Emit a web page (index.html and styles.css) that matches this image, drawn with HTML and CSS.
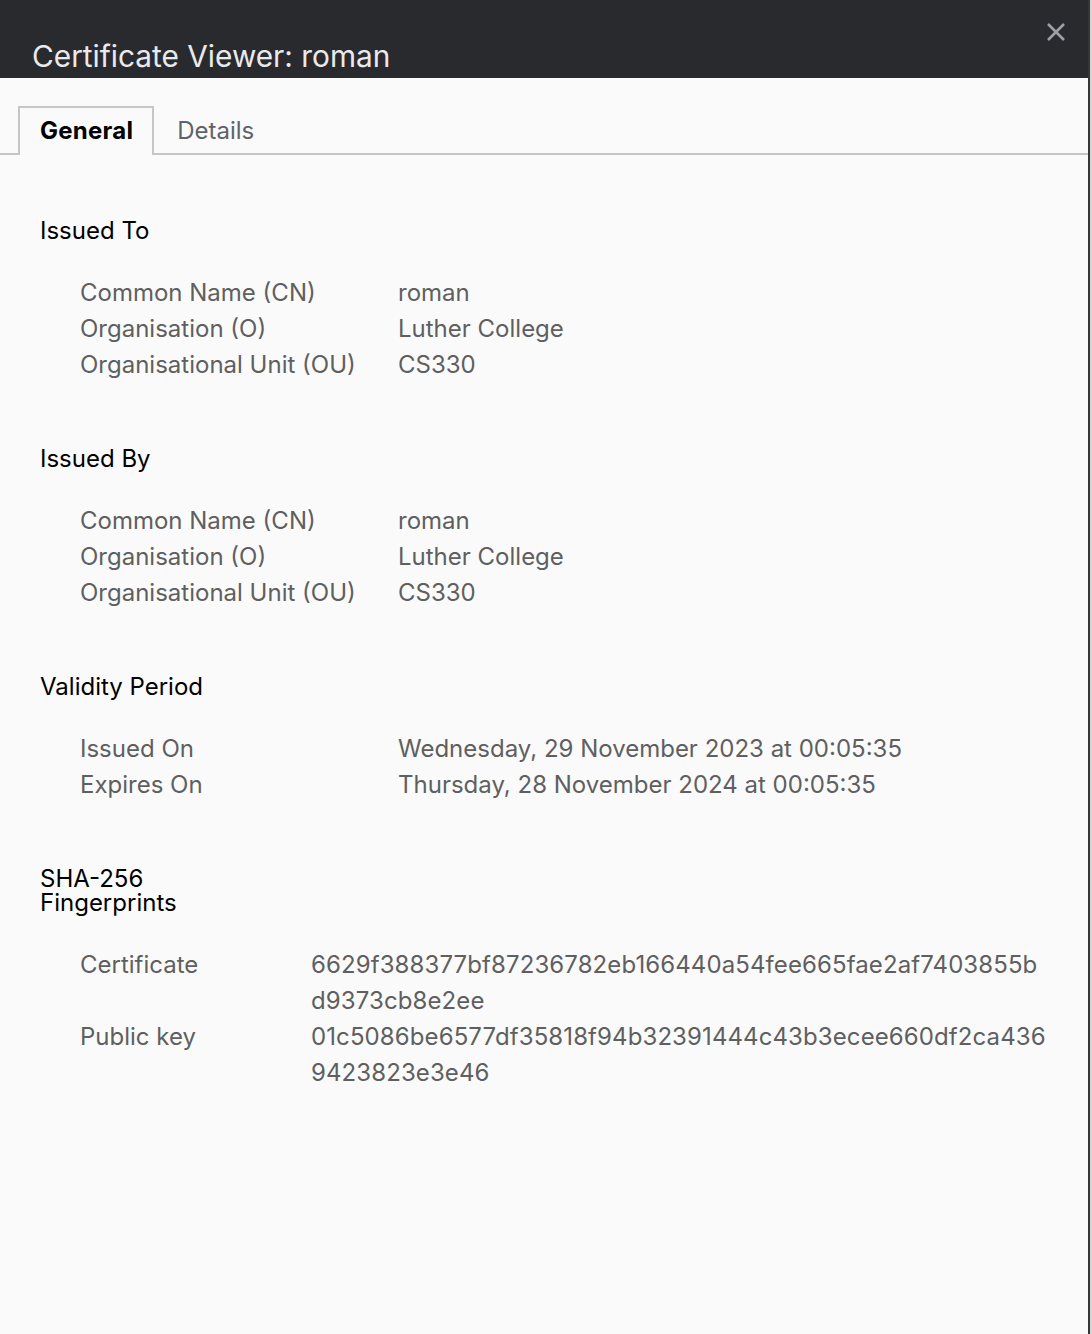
FILE: index.html
```html
<!DOCTYPE html>
<html lang="en">
<head>
<meta charset="utf-8">
<title>Certificate Viewer: roman</title>
<link rel="stylesheet" href="styles.css">
</head>
<body>
<div class="frame">
  <div class="dialog">
    <header class="titlebar">
      <h1 class="title">Certificate Viewer: roman</h1>
      <button class="close" aria-label="Close">
        <svg width="20" height="20" viewBox="0 0 20 20"><path d="M2 2 L18 18 M18 2 L2 18" stroke="#9aa0a6" stroke-width="2.6" stroke-linecap="butt" fill="none"/></svg>
      </button>
    </header>
    <nav class="tabs">
      <div class="tab active">General</div>
      <div class="tab">Details</div>
    </nav>
    <main class="content">
      <section class="section">
        <h2 class="heading">Issued To</h2>
        <div class="grid wide">
          <div class="label">Common Name (CN)</div><div class="value">roman</div>
          <div class="label">Organisation (O)</div><div class="value">Luther College</div>
          <div class="label">Organisational Unit (OU)</div><div class="value">CS330</div>
        </div>
      </section>
      <section class="section">
        <h2 class="heading">Issued By</h2>
        <div class="grid wide">
          <div class="label">Common Name (CN)</div><div class="value">roman</div>
          <div class="label">Organisation (O)</div><div class="value">Luther College</div>
          <div class="label">Organisational Unit (OU)</div><div class="value">CS330</div>
        </div>
      </section>
      <section class="section">
        <h2 class="heading">Validity Period</h2>
        <div class="grid wide">
          <div class="label">Issued On</div><div class="value">Wednesday, 29 November 2023 at 00:05:35</div>
          <div class="label">Expires On</div><div class="value">Thursday, 28 November 2024 at 00:05:35</div>
        </div>
      </section>
      <section class="section">
        <h2 class="heading two-line"><span>SHA-256</span><span>Fingerprints</span></h2>
        <div class="grid narrow">
          <div class="label">Certificate</div><div class="value hash">6629f388377bf87236782eb166440a54fee665fae2af7403855b<br>d9373cb8e2ee</div>
          <div class="label">Public key</div><div class="value hash">01c5086be6577df35818f94b32391444c43b3ecee660df2ca436<br>9423823e3e46</div>
        </div>
      </section>
    </main>
  </div>
</div>
</body>
</html>
```
FILE: styles.css
```css
* { box-sizing: border-box; }
html, body { margin: 0; padding: 0; }
body {
  background: #d6d6d6;
  font-family: Inter, "Noto Sans", "Liberation Sans", sans-serif;
  height: 1334px;
  overflow: hidden;
}
.frame {
  width: 1090px;
  height: 1334px;
  border-right: 2px solid #343538;
}
.dialog {
  width: 1088px;
  height: 1334px;
  background: #fafafa;
}
.titlebar {
  height: 78px;
  background: #292a2d;
  display: flex;
  justify-content: space-between;
  align-items: flex-start;
  padding: 0 22px 0 32px;
}
.title {
  margin: 0;
  padding-top: 39px;
  font-size: 29.8px;
  line-height: 34px;
  font-weight: 400;
  color: #e8eaed;
}
.close {
  margin-top: 22px;
  padding: 0;
  border: 0;
  background: none;
  width: 20px;
  height: 20px;
}
.close svg { display: block; }
.tabs {
  display: flex;
  padding: 28px 0 0 18px;
  border-bottom: 2px solid #c6c6c6;
}
.tab {
  font-size: 24px;
  line-height: 45px;
  color: #5f6368;
  padding: 0 22px 0 21px;
  border: 2px solid transparent;
  border-bottom: 0;
  margin-bottom: -2px;
}
.tab.active {
  color: #000;
  font-weight: 700;
  border-color: #c6c6c6;
  background: #fafafa;
  padding: 0 19px 2px 20px;
  letter-spacing: 0.25px;
}
.content {
  padding: 64px 0 0 40px;
}
.section { margin-bottom: 64px; }
.heading {
  margin: 0 0 32px;
  font-size: 24px;
  line-height: 24px;
  font-weight: 400;
  color: #000;
}
.heading.two-line {
  display: flex;
  flex-direction: column;
}
.grid {
  display: grid;
  margin-left: 40px;
  font-size: 24px;
  line-height: 36px;
  color: #5f5f5f;
}
.grid.wide { grid-template-columns: 318px 1fr; }
.grid.narrow { grid-template-columns: 231px 1fr; }
.value.hash { white-space: nowrap; letter-spacing: 0.1px; }
```
